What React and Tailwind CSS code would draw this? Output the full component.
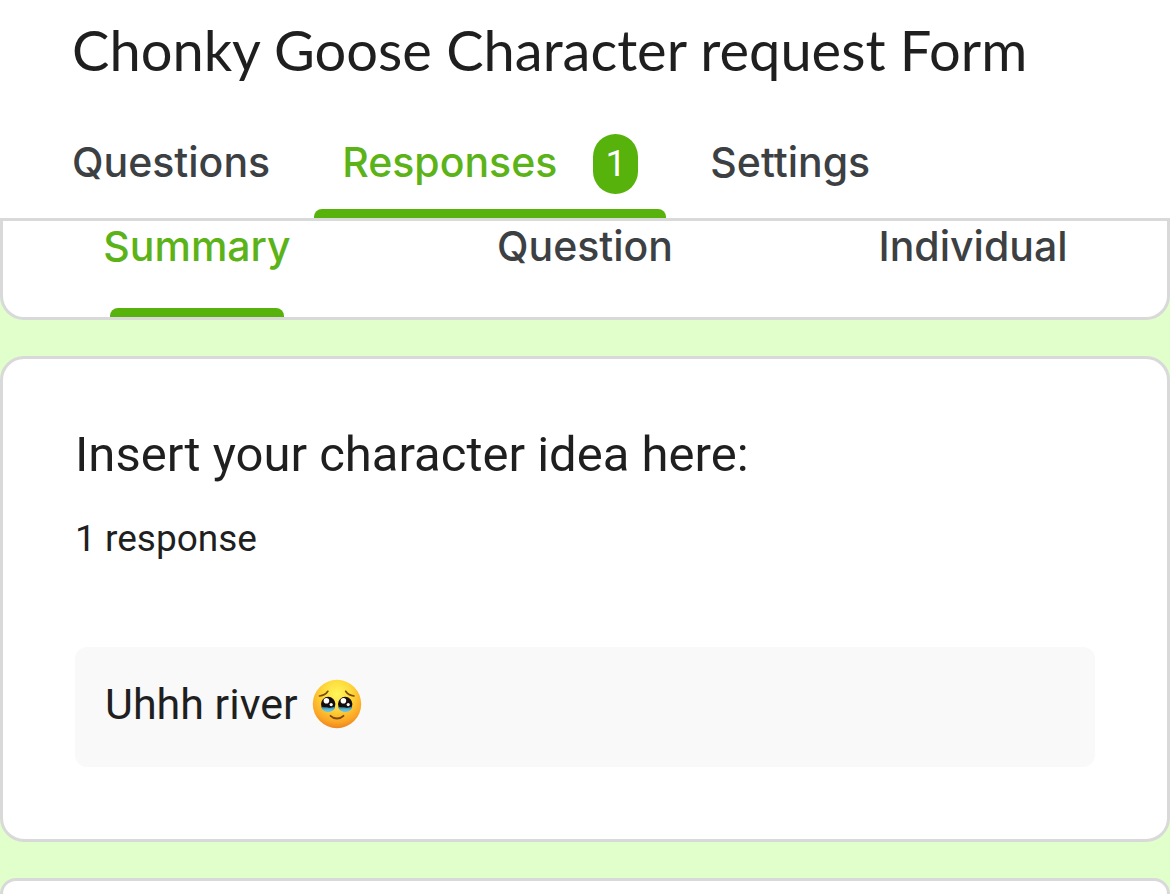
import React, { useState } from "react";

const mainTabs = [
  { id: "questions", label: "Questions" },
  { id: "responses", label: "Responses", count: 1 },
  { id: "settings", label: "Settings" },
];

const viewTabs = ["Summary", "Question", "Individual"];

function TearyFace() {
  return (
    <svg
      viewBox="0 0 50 50"
      className="h-[50px] w-[50px]"
      role="img"
      aria-label="Face holding back tears"
    >
      <defs>
        <radialGradient id="skin" cx="0.5" cy="0.3" r="0.72">
          <stop offset="0" stopColor="#fff65c" />
          <stop offset="0.4" stopColor="#fedb3c" />
          <stop offset="0.8" stopColor="#fba626" />
          <stop offset="1" stopColor="#ea801f" />
        </radialGradient>
        <linearGradient id="tear" x1="0" y1="0" x2="0" y2="1">
          <stop offset="0" stopColor="#2c6f8c" />
          <stop offset="0.6" stopColor="#58bfdd" />
          <stop offset="1" stopColor="#6fc8d8" />
        </linearGradient>
      </defs>
      <circle cx="25" cy="25" r="24.2" fill="url(#skin)" />
      {/* brows */}
      <g fill="none" stroke="#7c4a0c" strokeWidth="1.7" strokeLinecap="round">
        <path d="M7.5 17c3.8-.4 6.6-2 8.3-4.7" />
        <path d="M42 17c-3.800-.4-6.600-2-8.300-4.700" />
      </g>
      {/* eyes */}
      {[16.2, 33.2].map((x) => (
        <g key={x}>
          <circle cx={x} cy="25" r="7.2" fill="#150d0c" />
          <path
            d={`M${x - 7} 27.500c2 1.300 4 .2 7 .9s5-.4 7-.9c-.4 3.200-3.200 5.500-7 5.500s-6.600-2.300-7-5.500z`}
            fill="url(#tear)"
          />
          <circle cx={x - 1.8} cy="21.8" r="2.8" fill="#fff" />
          <circle cx={x + 3} cy="25.6" r="1.6" fill="#fff" />
        </g>
      ))}
      <path
        d="M18.5 36.8c3.6 3.6 9.4 3.6 13 0"
        fill="none"
        stroke="#7c4a0c"
        strokeWidth="1.8"
        strokeLinecap="round"
      />
    </svg>
  );
}

function App() {
  const [tab, setTab] = useState("responses");
  const [view, setView] = useState("Summary");

  return (
    <div className="flex min-h-screen flex-col bg-[#e0ffcb] font-['Roboto',sans-serif] text-[#1f1f1f]">
      <header className="border-b-3 border-[#d9d9d9] bg-white pt-4">
        <h1 className="px-[72px] font-['Lato',sans-serif] text-[56px] leading-[68px]">
          Chonky Goose Character request Form
        </h1>
        <nav className="mt-6 flex gap-4 px-11 font-['Inter',sans-serif] text-[41px] font-medium">
          {mainTabs.map((t) => (
            <button
              key={t.id}
              onClick={() => setTab(t.id)}
              className={`flex h-[110px] flex-col justify-between px-7 ${
                tab === t.id ? "text-[#5bb318]" : "text-[#3c4043]"
              }`}
            >
              <span className="mt-6 flex h-16 items-center gap-9 leading-[60px]">
                <span className="pb-1">{t.label}</span>
                {t.count && (
                  <span className="flex h-[60px] w-[45px] items-center justify-center rounded-full bg-[#57b30c] font-['Roboto',sans-serif] text-[37px] font-normal text-white">
                    {t.count}
                  </span>
                )}
              </span>
              {tab === t.id && (
                <span className="-mx-7 h-[9px] self-stretch rounded-t-lg bg-[#57b30c]" />
              )}
            </button>
          ))}
        </nav>
      </header>

      <main className="flex flex-1 flex-col gap-9">
        <section className="grid grid-cols-3 rounded-b-3xl border-3 border-t-0 border-[#d9d9d9] bg-white font-['Inter',sans-serif] text-[41px] font-medium">
          {viewTabs.map((name) => (
            <button
              key={name}
              onClick={() => setView(name)}
              className={`flex h-24 flex-col items-center justify-between ${
                view === name ? "text-[#5bb318]" : "text-[#3c4043]"
              }`}
            >
              <span className="leading-[50px]">{name}</span>
              {view === name && (
                <span className="h-[9px] w-[174px] rounded-t-lg bg-[#57b30c]" />
              )}
            </button>
          ))}
        </section>

        <section className="rounded-3xl border-3 border-[#d9d9d9] bg-white p-18">
          <h2 className="text-[49px] leading-[48px]">
            Insert your character idea here:
          </h2>
          <p className="mt-9 text-[37px] leading-[48px]">1 response</p>
          <div className="mt-21 flex h-[120px] items-center gap-3.5 rounded-xl bg-[#f9f9f9] px-[30px] pb-1.5 text-[43px]">
            Uhhh river
            <TearyFace />
          </div>
        </section>

        <section className="flex-1 rounded-t-3xl border-3 border-b-0 border-[#d9d9d9] bg-white" />
      </main>
    </div>
  );
}

export default App;
